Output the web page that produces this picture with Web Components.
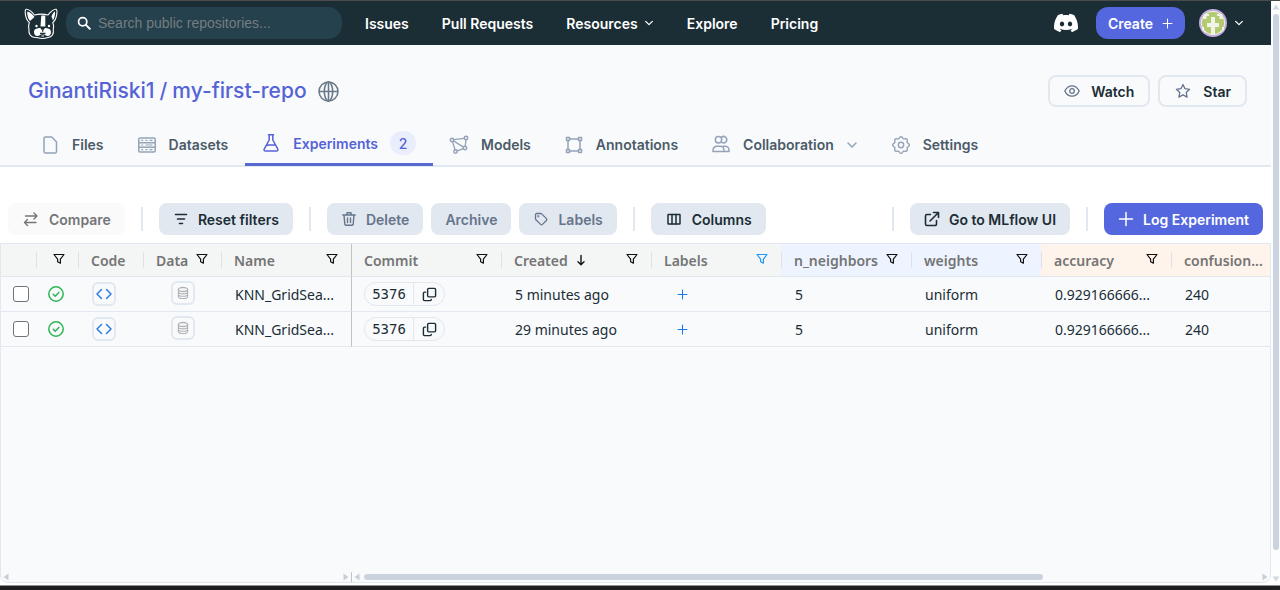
<!DOCTYPE html>
<html lang="en">
<head>
<meta charset="utf-8">
<meta name="viewport" content="width=device-width, initial-scale=1">
<title>GinantiRiski1/my-first-repo</title>
<style>
  html, body { margin: 0; }
  body { font-family: Inter, "Liberation Sans", sans-serif; font-size: 14px; color: #1b2d35; background: #fff; }
</style>
</head>
<body>
<app-shell>
  <top-bar slot="main"></top-bar>
  <repo-header slot="main" owner="GinantiRiski1" repo="my-first-repo">
    <repo-tab icon="file">Files</repo-tab>
    <repo-tab icon="dataset">Datasets</repo-tab>
    <repo-tab icon="flask" active count="2">Experiments</repo-tab>
    <repo-tab icon="model">Models</repo-tab>
    <repo-tab icon="annotate">Annotations</repo-tab>
    <repo-tab icon="people" menu>Collaboration</repo-tab>
    <repo-tab icon="gear">Settings</repo-tab>
  </repo-header>
  <tool-bar slot="main">
    <tool-button icon="compare" kind="ghost" wide>Compare</tool-button>
    <tool-divider></tool-divider>
    <tool-button icon="filterlines">Reset filters</tool-button>
    <tool-divider></tool-divider>
    <tool-button icon="trash" kind="muted">Delete</tool-button>
    <tool-button kind="muted">Archive</tool-button>
    <tool-button icon="tag" kind="muted">Labels</tool-button>
    <tool-divider></tool-divider>
    <tool-button icon="columns" wide>Columns</tool-button>
    <tool-divider slot="end"></tool-divider>
    <tool-button slot="end" icon="external">Go to MLflow UI</tool-button>
    <tool-divider slot="end"></tool-divider>
    <tool-button slot="end" icon="plus" kind="primary">Log Experiment</tool-button>
  </tool-bar>
  <experiment-grid slot="main"></experiment-grid>
</app-shell>

<script>
const svg = (box, body, fill = false) =>
  `<svg viewBox="0 0 ${box}" aria-hidden="true" fill="${fill ? 'currentColor' : 'none'}" ${fill ? '' : 'stroke="currentColor" stroke-width="1.5" stroke-linecap="round" stroke-linejoin="round"'}>${body}</svg>`;

// Outline of an eight-toothed cog with rounded teeth.
const cog = Array.from({ length: 96 }, (_, i) => {
  const a = i / 96 * Math.PI * 2, r = 7.5 + 0.8 * Math.cos(8 * a);
  return `${(10 + r * Math.cos(a)).toFixed(2)},${(10 + r * Math.sin(a)).toFixed(2)}`;
}).join(' ');

const ICONS = {
  search: svg('16 16', '<circle cx="6.5" cy="6.5" r="4.7" stroke-width="2"/><path d="M10.2 10.2 14.6 14.6" stroke-width="2.2"/>'),
  chevron: svg('12 12', '<path d="M2 4 6 8 10 4"/>'),
  discord: svg('24 24', '<path d="M20.317 4.3698a19.7913 19.7913 0 00-4.8851-1.5152.0741.0741 0 00-.0785.0371c-.211.3753-.4447.8648-.6083 1.2495-1.8447-.2762-3.68-.2762-5.4868 0-.1636-.3933-.4058-.8742-.6177-1.2495a.077.077 0 00-.0785-.037 19.7363 19.7363 0 00-4.8852 1.515.0699.0699 0 00-.0321.0277C.5334 9.0458-.319 13.5799.0992 18.0578a.0824.0824 0 00.0312.0561c2.0528 1.5076 4.0413 2.4228 5.9929 3.0294a.0777.0777 0 00.0842-.0276c.4616-.6304.8731-1.2952 1.226-1.9942a.076.076 0 00-.0416-.1057c-.6528-.2476-1.2743-.5495-1.8722-.8923a.077.077 0 01-.0076-.1277c.1258-.0943.2517-.1923.3718-.2914a.0743.0743 0 01.0776-.0105c3.9278 1.7933 8.18 1.7933 12.0614 0a.0739.0739 0 01.0785.0095c.1202.099.246.1981.3728.2924a.077.077 0 01-.0066.1276 12.2986 12.2986 0 01-1.873.8914.0766.0766 0 00-.0407.1067c.3604.698.7719 1.3628 1.225 1.9932a.076.076 0 00.0842.0286c1.961-.6067 3.9495-1.5219 6.0023-3.0294a.077.077 0 00.0313-.0552c.5004-5.177-.8382-9.6739-3.5485-13.6604a.061.061 0 00-.0312-.0286zM8.02 15.3312c-1.1825 0-2.1569-1.0857-2.1569-2.419 0-1.3332.9555-2.4189 2.157-2.4189 1.2108 0 2.1757 1.0952 2.1568 2.419 0 1.3332-.9555 2.4189-2.1569 2.4189zm7.9748 0c-1.1825 0-2.1569-1.0857-2.1569-2.419 0-1.3332.9554-2.4189 2.1569-2.4189 1.2108 0 2.1757 1.0952 2.1568 2.419 0 1.3332-.946 2.4189-2.1568 2.4189Z"/>', true),
  plus: svg('16 16', '<path d="M8 1.5v13M1.5 8h13"/>'),
  globe: svg('20 20', '<circle cx="10" cy="10" r="9"/><ellipse cx="10" cy="10" rx="4" ry="9"/><path d="M1.5 10H18.5M10 1v18"/>'),
  eye: svg('16 16', '<path d="M.8 8C2.4 4.600 5 2.800 8 2.800S13.600 4.600 15.200 8C13.600 11.400 11 13.200 8 13.200S2.400 11.400.8 8Z" stroke-width="1.300"/><circle cx="8" cy="8" r="2.300" stroke-width="1.300"/>'),
  star: svg('18 18', '<path d="m9 2.500 2 4.200 4.600.600-3.400 3.200.900 4.600L9 12.900l-4.100 2.200.900-4.600-3.400-3.200 4.600-.600Z" stroke-width="1.300"/>'),
  file: svg('20 20', '<path d="M5.500 2h6.300L16.500 7v9.500a1.500 1.500 0 0 1-1.500 1.500H5.500A1.500 1.500 0 0 1 4 16.500v-13A1.500 1.500 0 0 1 5.500 2Z"/>'),
  dataset: svg('20 20', '<rect x="1.800" y="3" width="16.400" height="14" rx="1.300"/><path d="M2 7.700h16M2 12.300h16" stroke-width="1.400"/><path d="M4.700 5.400h1M9 5.400h1M13 5.400h2M4.700 10h1M9 10h6M4.700 14.700h1M9 14.700h1M13 14.700h2" stroke-width="1.200"/>'),
  flask: svg('20 20', '<path d="M7.500 1.800h5M8.200 2v5L3.300 15.800c-.700 1.400 0 2.200 1.300 2.200h10.800c1.300 0 2-.800 1.300-2.200L11.800 7V2M5.700 12.500l2-.500h6.500"/>'),
  model: svg('20 20', '<circle cx="3" cy="5" r="1.700"/><circle cx="17" cy="3" r="1.700"/><circle cx="16" cy="13" r="1.700"/><circle cx="6.500" cy="16.500" r="1.700"/><path d="M4.700 4.700 15.200 3.300M17 4.800l-.800 6.400M14.300 13.600l-6.100 2.300M3.500 6.800l2.600 8M4.600 5.900l9.900 6.200" stroke-width="1.300"/>'),
  annotate: svg('20 20', '<path d="M5.500 4h9M5.500 16h9M4 5.500v9M16 5.500v9"/><rect x="2.500" y="2.500" width="3" height="3"/><rect x="14.500" y="2.500" width="3" height="3"/><rect x="2.500" y="14.500" width="3" height="3"/><rect x="14.500" y="14.500" width="3" height="3"/>'),
  people: svg('20 20', '<circle cx="7.500" cy="4.700" r="3.200"/><path d="M10.500 2.200a3.200 3.200 0 1 1 0 5M2 16.500v-1.300a4 4 0 0 1 4-4h3a4 4 0 0 1 4 4v1.300ZM12 11.200h2a4 4 0 0 1 4 4v1.300h-5"/>'),
  gear: svg('20 20', `<polygon points="${cog}" stroke-width="1.400"/><circle cx="10" cy="10" r="2.700" stroke-width="1.400"/>`),
  compare: svg('16 16', '<path d="M2.500 5h11.500M11 2l3 3-3 3M13 11.500H1.500M4.500 8.500l-3 3 3 3" stroke-width="1.400"/>'),
  filterlines: svg('16 16', '<path d="M2.500 3.500h11M4.500 8h7M6.500 12.500h3" stroke-width="1.600"/>'),
  trash: svg('16 16', '<path d="M1.800 4h12.400M5.500 4l.5-2.200h4L10.500 4M3 4l.8 9.200a1.200 1.200 0 0 0 1.200 1h6a1.200 1.200 0 0 0 1.200-1L13 4M6.500 7v4.500M9.500 7v4.500" stroke-width="1.400"/>'),
  tag: svg('16 16', '<path d="M2.500 3.700v4c0 .400.200.700.400 1l4.700 4.700c.6.600 1.300.600 1.900 0l3.900-3.900c.6-.6.6-1.300 0-1.900L8.700 2.900c-.3-.3-.6-.4-1-.4h-4c-.7 0-1.200.5-1.200 1.200Z" stroke-width="1.300"/><circle cx="5.300" cy="5.300" r=".4"/>'),
  columns: svg('16 16', '<rect x="2" y="3.500" width="12" height="9.500" rx=".5"/><path d="M6 3.500v9.500M10 3.500v9.500" stroke-width="1.500"/>'),
  external: svg('16 16', '<path d="M6.500 3.500H3a1.500 1.500 0 0 0-1.500 1.500v8A1.500 1.500 0 0 0 3 14.500h8a1.500 1.500 0 0 0 1.500-1.500V9.500M9.500 1.500h5v5M14.300 1.700 6 10" stroke-width="1.600"/>'),
  funnel: svg('12 12', '<path d="M1 1.500h10L7.400 6.200v4L4.600 8.800V6.200Z" stroke-width="1.200"/>'),
  down: svg('10 12', '<path d="M5 1.500v9M2 7.800l3 2.900 3-2.900" stroke-width="1.400"/>'),
  check: svg('16 16', '<circle cx="8" cy="8" r="7.200"/><path d="m5.200 8.200 2 2 3.600-3.800"/>'),
  code: svg('16 16', '<path d="M5.500 3.500 1 8l4.500 4.500M10.500 3.500 15 8l-4.500 4.500"/>'),
  data: svg('16 16', '<ellipse cx="8" cy="4" rx="5.300" ry="2.300"/><path d="M2.700 4v8c0 1.300 2.400 2.300 5.300 2.300s5.300-1 5.300-2.300V4M2.700 6.700C2.700 8 5.100 9 8 9s5.300-1 5.300-2.300M2.700 9.400c0 1.300 2.400 2.300 5.300 2.300s5.300-1 5.300-2.300" stroke-width="1.200"/>'),
  copy: svg('16 16', '<rect x="6" y="1.500" width="8.500" height="9" rx="1.200"/><path d="M3.800 5.500H2.700a1.200 1.200 0 0 0-1.200 1.200v6.600a1.200 1.200 0 0 0 1.200 1.200h6a1.200 1.200 0 0 0 1.200-1.200"/>'),
  arrow: svg('6 8', '<path d="M5.500.5v7L.5 4Z"/>', true),
  dog: `<svg viewBox="0 0 34 31" aria-hidden="true"><g stroke="#fff" stroke-linejoin="round" stroke-linecap="round">
    <path d="M10.500 7C8 3.500 4 .8 2 1.300.6 2 1 7 2.700 11c.8 1.800 1.600 2.800 2.600 3.500-.7 2-.9 4.500-.4 6.500-.4 5 1.600 8.300 6.100 8.500l3 .2c2 1 7 1 9 0l1-.2c4-.2 6-3.500 5.300-8.500.5-2 .3-4.500-.5-6.500 1-.7 2-1.700 2.700-3.500 1.600-4 2-9 .7-9.700C30.300.8 26.500 3.500 24 7c-4-1-9.500-1-13.500 0Z" fill="#1b2d35" stroke-width="1.100"/>
    <path d="M3.200 3.500C6 4 9 6.500 10.500 9L6 13C4 10.500 3 6.700 3.200 3.500ZM31 3.500C29.500 4 28 6.500 27.500 8.500L29 12.500C30.500 10 31.200 6.700 31 3.500Z" fill="#fff" stroke="none"/>
    <path d="M17.300 7.500h4v11h-4.800ZM10 24c0-3 2.500-3.500 5-4h7c2.500.5 5 1 5 4 0 3-2 4.500-4.500 3.800L18.500 26l-4 1.800C12 28.500 10 27 10 24Z" fill="#fff" stroke="none"/></g>
    <path d="M16.200 19.500h5l-1.200 2.300h-2.600Z" fill="#1b2d35"/><path d="M18.700 21.800v2M16 25.500h5.500" fill="none" stroke="#1b2d35" stroke-width="1.300"/>
    <path d="M17.500 28h2.500" stroke="#fff"/><circle cx="12.500" cy="18" r="1.200" fill="#fff"/><circle cx="25" cy="18" r="1.200" fill="#fff"/></svg>`,
  avatar: `<svg viewBox="0 0 28 28" role="img" aria-label="Account"><circle cx="14" cy="14" r="13" fill="#b2cb70" stroke="#c3a9df" stroke-width="2"/><circle cx="14" cy="14" r="11.700" fill="none" stroke="#f1f3e9" stroke-width="1"/><path d="M5 5h5v2H7.500v3H4ZM23 5h-5v2h2.500v3H24ZM3 18h2v4H7v2L3 21ZM25 18h-2v4H21v2l4-3ZM12 8h4v6h4v4h-4v7h-4v-7H8v-4h4Z" fill="#f1f3e9"/></svg>`
};

const BASE = `*, *::before { box-sizing: border-box; }
  svg { display: block; width: 100%; height: 100%; }
  button { font: inherit; color: inherit; margin: 0; padding: 0; border: 0; background: none; cursor: pointer; }
  a { color: inherit; text-decoration: none; }`;

class Base extends HTMLElement {
  connectedCallback() {
    if (this.shadowRoot) return;
    const t = document.createElement('template');
    t.innerHTML = `<style>${BASE}</style>${this.view()}`;
    this.attachShadow({ mode: 'open' }).append(t.content.cloneNode(true));
  }
}

class UiIcon extends Base {
  view() {
    return `<style>:host { display: block; flex: none; width: 16px; height: 16px; }</style>${ICONS[this.getAttribute('name')]}`;
  }
}

class AppShell extends Base {
  view() {
    return `<style>
      :host { display: flex; flex-direction: column; min-height: 100vh; border-top: 1px solid #4b4b4c; border-bottom: 4px solid #1f1f21; box-sizing: border-box; }
      .page { flex: 1; display: flex; }
      main { flex: 1; min-width: 0; display: flex; flex-direction: column; padding-bottom: 2px; }
      .edge { height: 1px; background: #8e9092; }
    </style>
    <div class="page"><main><slot name="main"></slot></main><page-scroll></page-scroll></div><div class="edge"></div>`;
  }
}

class PageScroll extends Base {
  view() {
    return `<style>
      :host { flex: none; width: 9px; display: flex; flex-direction: column; align-items: center; gap: 3px; padding: 2px 0; box-sizing: border-box; background: #fdfdfe; color: #d3d7de; }
      ui-icon { width: 6px; height: 8px; }
      .up { rotate: 90deg; } .down { rotate: -90deg; }
      .track { flex: 1; width: 6px; }
      .thumb { width: 100%; height: 96%; border-radius: 3px; background: #cbd3e0; }
    </style><ui-icon class="up" name="arrow"></ui-icon><div class="track"><div class="thumb"></div></div><ui-icon class="down" name="arrow"></ui-icon>`;
  }
}

class TopBar extends Base {
  view() {
    return `<style>
      :host { display: flex; align-items: center; height: 44px; padding: 0 27px 0 24px; box-sizing: border-box; background: #1b2d35; color: #fff; font-weight: 600; }
      .logo { width: 34px; height: 31px; margin-right: 8px; }
      .logo ui-icon { width: 34px; height: 31px; }
      label { display: flex; align-items: center; gap: 7px; width: 276px; height: 32px; padding: 0 11px; border-radius: 14px; background: #24414d; }
      label ui-icon { width: 14px; height: 14px; }
      input { flex: 1; min-width: 0; border: 0; padding: 0; outline: 0; background: none; color: #fff; font: 14px "Liberation Sans", sans-serif; }
      input::placeholder { color: #757d80; opacity: 1; }
      nav { display: flex; gap: 33px; margin-left: 23px; }
      nav a { display: flex; align-items: center; gap: 6px; }
      .chev { width: 10px; height: 10px; }
      .right { display: flex; align-items: center; margin-left: auto; }
      .discord ui-icon { width: 24px; height: 24px; }
      .create { display: flex; align-items: center; gap: 9px; height: 32px; margin: 0 14px 0 18px; padding: 0 12px; border-radius: 12px; background: #5567de; }
      .create ui-icon { width: 11px; height: 11px; }
      .user { display: flex; align-items: center; gap: 7px; }
      .user .face { width: 28px; height: 28px; }
    </style>
    <a class="logo" href="#" aria-label="Home"><ui-icon name="dog"></ui-icon></a>
    <label><ui-icon name="search"></ui-icon><input type="search" aria-label="Search" placeholder="Search public repositories..."></label>
    <nav><a href="#">Issues</a><a href="#">Pull Requests</a><a href="#">Resources <ui-icon class="chev" name="chevron"></ui-icon></a><a href="#">Explore</a><a href="#">Pricing</a></nav>
    <div class="right"><a class="discord" href="#" aria-label="Discord"><ui-icon name="discord"></ui-icon></a>
      <button class="create">Create <ui-icon name="plus"></ui-icon></button>
      <button class="user" aria-label="Account menu"><ui-icon class="face" name="avatar"></ui-icon><ui-icon class="chev" name="chevron"></ui-icon></button></div>`;
  }
}

class RepoHeader extends Base {
  view() {
    return `<style>
      :host { display: block; padding-top: 30px; background: #f8fafc; border-bottom: 2px solid #e2e8f0; }
      .title { display: flex; align-items: center; gap: 8px; padding: 0 24px 0 28px; height: 32px; }
      h1 { display: flex; gap: 5px; margin: 0 auto 0 0; font-size: 21px; line-height: 28px; font-weight: 500; color: #5563d6; align-items: center; }
      h1 ui-icon { width: 21px; height: 21px; margin-left: 6px; color: #6b7888; }
      .title button { display: flex; align-items: center; gap: 11px; height: 32px; padding: 0 14px; border: 2px solid #e2e8f0; border-radius: 8px; font-weight: 600; }
      .title button ui-icon { color: #64748b; }
      .title .star { width: 18px; height: 18px; }
      nav { display: flex; height: 59px; padding-left: 24px; margin-bottom: -1px; }
    </style>
    <div class="title"><h1><a href="#">${this.getAttribute('owner')}</a><span>/</span><a href="#">${this.getAttribute('repo')}</a><ui-icon name="globe"></ui-icon></h1>
      <button><ui-icon name="eye"></ui-icon>Watch</button><button><ui-icon class="star" name="star"></ui-icon>Star</button></div>
    <nav><slot></slot></nav>`;
  }
}

class RepoTab extends Base {
  view() {
    const n = this.getAttribute('count');
    return `<style>
      :host { display: flex; color: #4b5a68; font-weight: 600; }
      a { display: flex; align-items: center; gap: 12px; padding: 16px 17px 0 16px; }
      .ic { width: 20px; height: 20px; color: #94a3b8; }
      .chev { width: 12px; height: 12px; color: #94a3b8; }
      :host([active]) { color: #5563d6; }
      :host([active]) a { border-bottom: 3px solid #5a69d0; }
      :host([active]) .ic { color: #5563d6; }
      b { display: grid; place-items: center; width: 26px; height: 24px; border-radius: 12px; background: #eaedfc; font-weight: 500; }
    </style><a href="#"><ui-icon class="ic" name="${this.getAttribute('icon')}"></ui-icon><slot></slot>${n ? `<b>${n}</b>` : ''}${this.hasAttribute('menu') ? '<ui-icon class="chev" name="chevron"></ui-icon>' : ''}</a>`;
  }
}

class ToolBar extends Base {
  view() {
    return `<style>
      :host { display: flex; justify-content: space-between; padding: 36px 8px 8px; }
      div { display: flex; align-items: center; gap: 8px; }
    </style><div><slot></slot></div><div><slot name="end"></slot></div>`;
  }
}

class ToolDivider extends Base {
  view() { return `<style>:host { display: block; width: 2px; height: 24px; margin: 0 8px; background: #e2e8f0; }</style>`; }
}

class ToolButton extends Base {
  view() {
    const icon = this.getAttribute('icon');
    return `<style>
      :host { display: block; }
      button { display: flex; align-items: center; gap: 9px; height: 32px; padding: 0 14px; border-radius: 8px; background: #e2e8f0; font-weight: 600; white-space: nowrap; }
      :host([wide]) ui-icon { width: 18px; }
      :host([kind=ghost]) button { background: #fafafb; color: #757577; }
      :host([kind=muted]) button { color: #66758c; }
      :host([kind=primary]) button { background: #5567de; color: #fff; }
    </style><button>${icon ? `<ui-icon name="${icon}"></ui-icon>` : ''}<slot></slot></button>`;
  }
}

class ExperimentGrid extends Base {
  view() {
    const cols = [
      ['', 35, ''], ['', 42, 'f'], ['Code', 65, ''], ['Data', 78, 'f'], ['Name', 130, 'f'], ['Commit', 150, 'f pin'], ['Created', 150, 'f sort'],
      ['Labels', 130, 'f on'], ['n_neighbors', 130, 'f param'], ['weights', 130, 'f param'], ['accuracy', 130, 'f metric'], ['confusion...', 0, 'metric last']
    ];
    const rows = [['KNN_GridSea...', '5376', '5 minutes ago', '5', 'uniform', '0.929166666...', '240'],
                  ['KNN_GridSea...', '5376', '29 minutes ago', '5', 'uniform', '0.929166666...', '240']];
    const head = cols.map(([t, , c]) => `<th scope="col" class="${c}"><div><span>${t}</span>${c.includes('sort') ? '<ui-icon class="arrow" name="down"></ui-icon>' : ''}${c[0] === 'f' ? '<button aria-label="Filter"><ui-icon name="funnel"></ui-icon></button>' : ''}</div></th>`).join('');
    const body = rows.map(([name, commit, when, n, w, acc, conf]) => `<tr>
      <td class="icon"><input type="checkbox" aria-label="Select experiment"></td>
      <td class="icon"><ui-icon class="ok" name="check"></ui-icon></td>
      <td><button class="box code" aria-label="Code"><ui-icon name="code"></ui-icon></button></td>
      <td><button class="box data" aria-label="Data"><ui-icon name="data"></ui-icon></button></td>
      <td>${name}</td>
      <td class="pin"><span class="pill"><a href="#">${commit}</a><button aria-label="Copy"><ui-icon name="copy"></ui-icon></button></span></td>
      <td>${when}</td>
      <td><button class="add" aria-label="Add label"><ui-icon name="plus"></ui-icon></button></td>
      <td>${n}</td><td>${w}</td><td>${acc}</td><td>${conf}</td></tr>`).join('');
    return `<style>
      :host { flex: 1; display: flex; flex-direction: column; justify-content: space-between; border: 1px solid #e2e8f0; border-radius: 0 0 8px 8px; background: #f8fafc; overflow: hidden; font-family: "Noto Sans", "Open Sans", sans-serif; }
      table { width: 100%; table-layout: fixed; border-collapse: separate; border-spacing: 0; }
      th, td { padding: 0 13px; text-align: left; white-space: nowrap; border-bottom: 1px solid #e2e8f0; }
      th { height: 33px; font-weight: 600; color: #757575; background: linear-gradient(#dfe1e3, #dfe1e3) left center / 1px 16px no-repeat var(--tint, #f4f6f6); }
      th:first-child { background: #f4f6f6; }
      th.param { --tint: #edf4ff; } th.metric { --tint: #fff4eb; }
      th div { display: flex; align-items: center; }
      th.last, td:last-child { padding-right: 1px; }
      th button { margin-left: auto; padding-bottom: 2px; color: #111; }
      th.on button { color: #2196f3; }
      th button ui-icon { width: 12px; height: 12px; }
      .arrow { width: 10px; height: 12px; margin-left: 8px; color: #111; }
      td { height: 35px; padding-left: 14px; padding-right: 12px; }
      td.icon { padding: 0 12px; }
      .pin { border-left: 1px solid #bdc3c7; }
      th.pin { background: var(--tint, #f4f6f6); padding-left: 12px; }
      td.pin { padding-left: 12px; }
      input { display: block; appearance: none; width: 16px; height: 16px; margin: 0; border: 1px solid #6f7479; border-radius: 3px; background: #fff; }
      .ok { color: #2fb457; }
      .box { display: grid; place-items: center; width: 24px; height: 24px; border: 2px solid #e2e8f0; border-radius: 6px; }
      .code { color: #2f7de0; } .data { color: #b0b3b6; margin-left: 14px; margin-bottom: 2px; }
      .data ui-icon { width: 14px; height: 14px; }
      .pill { display: flex; align-items: center; width: 81px; height: 24px; border: 1px solid #e2e8f0; border-radius: 12px; }
      .pill a { flex: 1; text-align: center; font-family: "DejaVu Sans Mono", monospace; font-size: 14px; }
      .pill button { display: grid; place-items: center; width: 31px; height: 22px; border-left: 1px solid #e2e8f0; }
      .pill ui-icon { width: 15px; height: 15px; }
      .add { display: block; color: #1f7ae0; margin-left: 12px; }
      .add ui-icon { width: 11px; height: 11px; }
      .scroll { display: flex; height: 10px; color: #c9ced6; }
      .scroll div { display: flex; align-items: center; gap: 4px; padding: 0 2px; }
      .scroll .left { width: 350px; justify-content: space-between; }
      .scroll .right { flex: 1; border-left: 1px solid #bdc3c7; }
      .scroll ui-icon { width: 6px; height: 8px; }
      .flip { rotate: 180deg; }
      .track { flex: 1; } .track i { display: block; width: 76%; height: 6px; border-radius: 3px; background: #cbd3e0; }
    </style>
    <table><colgroup>${cols.map(c => `<col${c[1] ? ` style="width:${c[1]}px"` : ''}>`).join('')}</colgroup><thead><tr>${head}</tr></thead><tbody>${body}</tbody></table>
    <div class="scroll"><div class="left"><ui-icon name="arrow"></ui-icon><ui-icon class="flip" name="arrow"></ui-icon></div>
      <div class="right"><ui-icon name="arrow"></ui-icon><span class="track"><i></i></span><ui-icon class="flip" name="arrow"></ui-icon></div></div>`;
  }
}

[['ui-icon', UiIcon], ['page-scroll', PageScroll], ['app-shell', AppShell], ['top-bar', TopBar], ['repo-header', RepoHeader], ['repo-tab', RepoTab],
 ['tool-bar', ToolBar], ['tool-divider', ToolDivider], ['tool-button', ToolButton], ['experiment-grid', ExperimentGrid]]
  .forEach(([name, cls]) => customElements.define(name, cls));
</script>
</body>
</html>
